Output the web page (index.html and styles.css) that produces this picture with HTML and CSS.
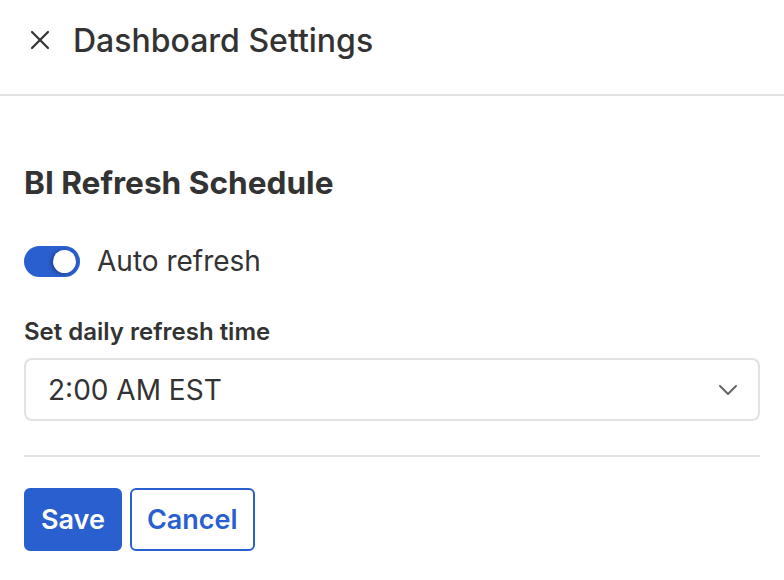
FILE: index.html
```html
<!DOCTYPE html>
<html lang="en">
<head>
    <meta charset="UTF-8">
    <meta name="viewport" content="width=device-width, initial-scale=1.0">
    <title>Dashboard Settings</title>
    <link rel="stylesheet" href="styles.css">
</head>
<body>
    <div class="panel">
        <header class="panel-header">
            <button class="close-button" aria-label="Close">
                <svg width="22" height="22" viewBox="0 0 22 22">
                    <path d="M3 3 L19 19 M19 3 L3 19" stroke="#333" stroke-width="2.2" stroke-linecap="round" fill="none"/>
                </svg>
            </button>
            <h1 class="panel-title">Dashboard Settings</h1>
        </header>

        <section class="panel-body">
            <h2 class="section-title">BI Refresh Schedule</h2>

            <label class="toggle-row">
                <span class="toggle on"><span class="knob"></span></span>
                <span class="toggle-label">Auto refresh</span>
            </label>

            <div class="field">
                <div class="field-label">Set daily refresh time</div>
                <div class="select">
                    <span class="select-value">2:00 AM EST</span>
                    <svg class="chevron" width="20" height="12" viewBox="0 0 20 12">
                        <path d="M2 2 L10 10 L18 2" stroke="#666" stroke-width="2" stroke-linecap="round" stroke-linejoin="round" fill="none"/>
                    </svg>
                </div>
            </div>

            <hr class="divider">

            <div class="actions">
                <button class="btn btn-primary">Save</button>
                <button class="btn btn-outline">Cancel</button>
            </div>
        </section>
    </div>
</body>
</html>
```

FILE: styles.css
```css
body {
    margin: 0;
    background: #fff;
    font-family: Inter, 'Noto Sans', sans-serif;
    color: #333;
}

.panel-header {
    display: flex;
    align-items: center;
    height: 80px;
    padding: 0 24px 14px 28px;
    border-bottom: 2px solid #e2e2e2;
}

.close-button {
    background: none;
    border: none;
    padding: 0;
    width: 24px;
    height: 24px;
    display: flex;
    align-items: center;
    justify-content: center;
    cursor: pointer;
}

.panel-title {
    margin: 0 0 0 21px;
    font-size: 32px;
    font-weight: 500;
    color: #333;
}

.panel-body {
    padding: 67px 24px 0 24px;
}

.section-title {
    margin: 0;
    font-size: 31.6px;
    font-weight: 700;
    line-height: 40px;
    color: #333;
}

.toggle-row {
    display: flex;
    align-items: center;
    gap: 17px;
    margin-top: 42px;
}

.toggle {
    position: relative;
    width: 56px;
    height: 31px;
    border-radius: 16px;
    background: #2a5fcf;
}

.toggle .knob {
    position: absolute;
    top: 4px;
    right: 4px;
    width: 23px;
    height: 23px;
    border-radius: 50%;
    background: #fff;
    box-shadow: -2px 1px 4px rgba(0, 0, 0, 0.3);
}

.toggle-label {
    font-size: 28px;
    line-height: 32px;
    color: #333;
}

.field {
    margin-top: 40px;
}

.field-label {
    font-size: 24px;
    font-weight: 600;
    color: #333;
    line-height: 30px;
}

.select {
    display: flex;
    align-items: center;
    justify-content: space-between;
    height: 59px;
    margin-top: 11px;
    padding: 0 20px 0 22px;
    border: 2px solid #e2e2e2;
    border-radius: 8px;
}

.select-value {
    font-size: 28px;
    color: #333;
}

.divider {
    border: none;
    border-top: 2px solid #e2e2e2;
    margin: 34px 0 0 0;
}

.actions {
    display: flex;
    gap: 8px;
    margin-top: 31px;
}

.btn {
    height: 63px;
    padding: 0 15px;
    font-family: Inter, 'Noto Sans', sans-serif;
    font-size: 27px;
    font-weight: 600;
    border-radius: 6px;
    cursor: pointer;
}

.btn-primary {
    background: #2a5fcf;
    color: #fff;
    border: 2px solid #2a5fcf;
}

.btn-outline {
    background: #fff;
    color: #2a5fcf;
    border: 2px solid #2a5fcf;
}
```
